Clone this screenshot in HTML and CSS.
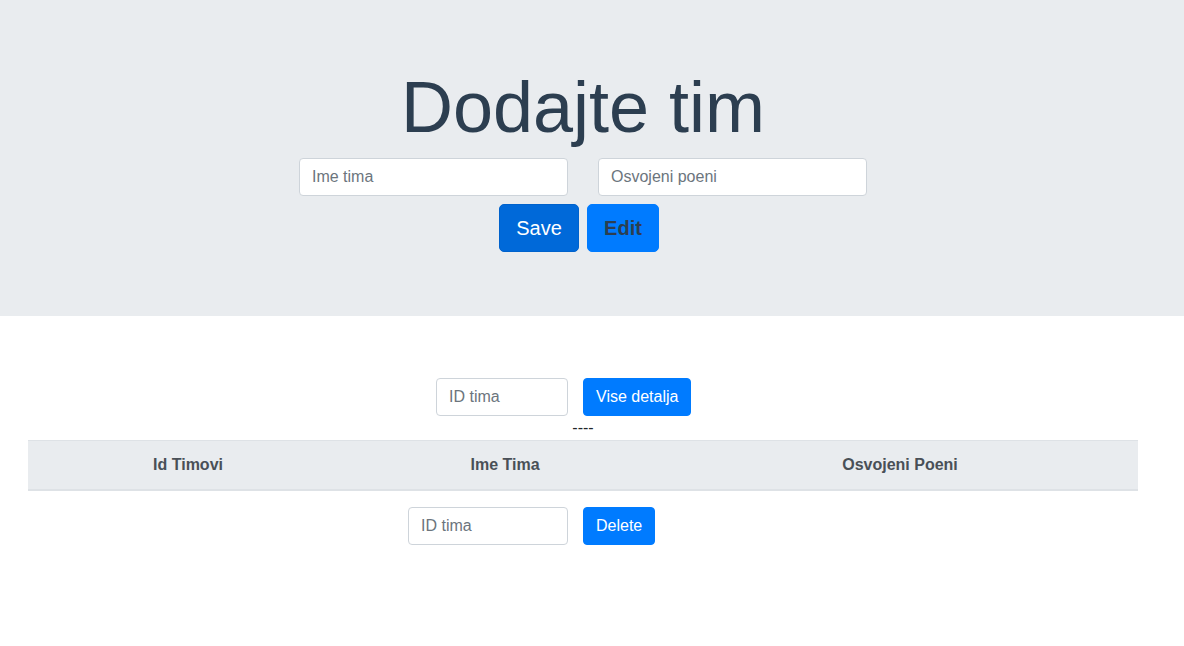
FILE: index.html
```html
<!DOCTYPE html>
<html>
<head>
<meta charset="utf-8">
<link rel="stylesheet" href="styles.css">
</head>
<body>
<section class="jumbotron">
  <h1 class="title">Dodajte tim</h1>
  <div class="field-row">
    <input class="input input-wide" type="text" placeholder="Ime tima">
    <input class="input input-wide" type="text" placeholder="Osvojeni poeni">
  </div>
  <div class="btn-row">
    <button class="btn btn-lg btn-save">Save</button>
    <button class="btn btn-lg btn-edit">Edit</button>
  </div>
</section>
<main class="content">
  <div class="pair-row">
    <div class="pair-left"><input class="input input-id" type="text" placeholder="ID tima"></div>
    <div class="pair-right"><button class="btn btn-primary">Vise detalja</button></div>
  </div>
  <div class="dashes">----</div>
  <table class="table">
    <thead>
      <tr>
        <th class="col1">Id Timovi</th>
        <th class="col2">Ime Tima</th>
        <th class="col3">Osvojeni Poeni</th>
      </tr>
    </thead>
  </table>
  <div class="pair-row delete-row">
    <div class="pair-left"><input class="input input-id2" type="text" placeholder="ID tima"></div>
    <div class="pair-right"><button class="btn btn-primary">Delete</button></div>
  </div>
</main>
</body>
</html>
```
FILE: styles.css
```css
* { box-sizing: border-box; }
html, body { margin: 0; padding: 0; }
body {
  font-family: "Liberation Sans", Arial, sans-serif;
  font-size: 16px;
  line-height: 1.5;
  color: #212529;
  background: #fff;
}
.jumbotron {
  background: #e9ecef;
  padding: 64px 18px 64px 0;
  display: flex;
  flex-direction: column;
  align-items: center;
}
.title {
  margin: 0;
  font-size: 72px;
  font-weight: 300;
  line-height: 86.4px;
  color: #2c3e50;
}
.field-row {
  margin-top: 8px;
  display: flex;
  gap: 30px;
}
.input {
  height: 38px;
  border: 1px solid #ced4da;
  border-radius: 4px;
  padding: 6px 12px;
  font-family: "Liberation Sans", Arial, sans-serif;
  font-size: 16px;
  color: #495057;
  background: #fff;
  outline: none;
}
.input::placeholder { color: #6c757d; }
.input-wide { width: 269px; }
.input-id { width: 132px; }
.input-id2 { width: 160px; }
.btn-row {
  margin-top: 8px;
  display: flex;
  gap: 8px;
  margin-right: 8px;
}
.btn {
  border: 1px solid transparent;
  border-radius: 4px;
  font-family: "Liberation Sans", Arial, sans-serif;
  cursor: pointer;
}
.btn-lg {
  height: 48px;
  padding: 8px 16px;
  font-size: 20px;
  line-height: 30px;
  border-radius: 5px;
}
.btn-save {
  background: #0069d9;
  border-color: #0062cc;
  color: #fff;
  width: 80px;
}
.btn-edit {
  background: #007bff;
  border-color: #007bff;
  color: #2c3e50;
  font-weight: 700;
  width: 72px;
}
.btn-primary {
  height: 38px;
  padding: 6px 12px;
  font-size: 16px;
  line-height: 24px;
  background: #007bff;
  border-color: #007bff;
  color: #fff;
}
.content {
  margin-left: 28px;
  width: 1110px;
  padding-top: 62px;
}
.pair-row {
  display: flex;
  gap: 15px;
}
.pair-left {
  width: 540px;
  display: flex;
  justify-content: flex-end;
}
.pair-right { display: flex; }
.dashes {
  text-align: center;
  font-size: 16px;
  line-height: 24px;
  color: #212529;
}
.table {
  width: 100%;
  border-collapse: collapse;
}
.table th {
  background: #e9ecef;
  color: #495057;
  font-weight: 700;
  padding: 12px;
  line-height: 24px;
  text-align: center;
  border-top: 1px solid #dee2e6;
  border-bottom: 2px solid #dee2e6;
}
.col1 { width: 320px; }
.col2 { width: 314px; }
.col3 { width: 476px; }
.delete-row { margin-top: 16px; }
```
